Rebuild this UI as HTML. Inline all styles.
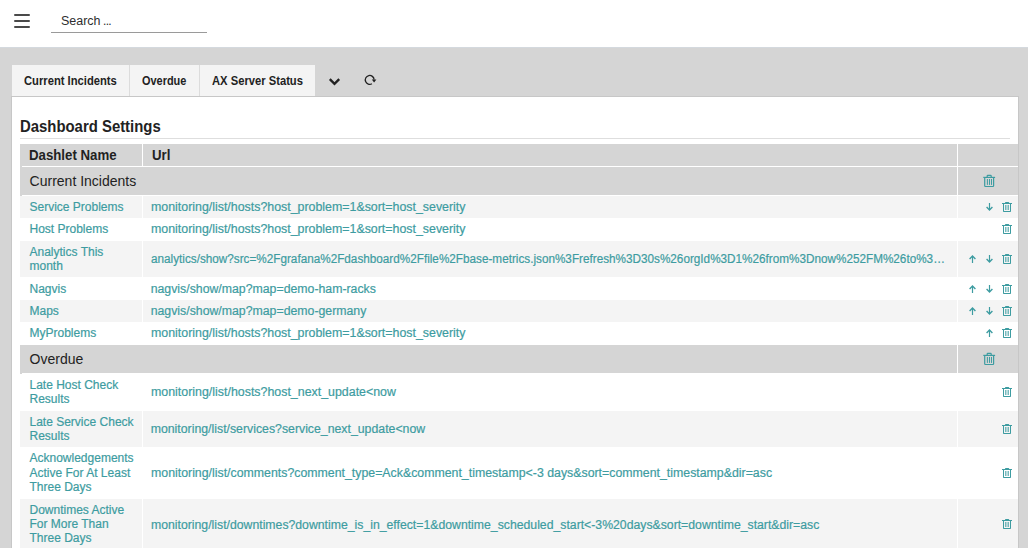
<!DOCTYPE html>
<html><head><meta charset="utf-8"><style>
*{box-sizing:border-box;margin:0;padding:0}
html,body{width:1028px;height:548px;overflow:hidden;background:#d5d5d5;font-family:"Liberation Sans",sans-serif;color:#222}
.a{position:absolute}
#hdr{left:0;top:0;width:1028px;height:47px;background:#fff}
.bar{position:absolute;left:13.6px;width:16.6px;height:2px;background:#4a4a4a;border-radius:1px}
.t{position:absolute;white-space:nowrap;line-height:1}
.b{font-weight:bold}
.sx{transform-origin:0 0}
.tab{position:absolute;top:65px;height:31px;background:#f4f4f4}
.tsep{position:absolute;top:65px;width:1px;height:31px;background:#dcdcdc}
.row{position:absolute;left:20px;width:998px;overflow:hidden}
.g{background:#d5d5d5}
.s{background:#f4f4f4}
.w{background:#fff}
.vs{position:absolute;top:0;bottom:0;width:1px;background:#fff}
.nm{position:absolute;left:9.5px;font-size:12px;line-height:14.6px;white-space:nowrap;color:#3d9ca1;-webkit-text-stroke:0.2px #3d9ca1}
.url{position:absolute;left:130.7px;font-size:12.3px;line-height:1;white-space:nowrap;color:#3d9ca1;-webkit-text-stroke:0.2px #3d9ca1}
svg.ic{position:absolute;left:0;top:0;overflow:visible}
</style></head><body>
<div id="hdr" class="a"><div class="bar" style="top:14px"></div><div class="bar" style="top:20px"></div><div class="bar" style="top:26px"></div>
<div class="t sx" style="left:60.5px;top:15px;font-size:12px;color:#2e2e2e;transform:scaleX(1.04);">Search</div>
<div class="t" style="left:103.1px;top:15px;font-size:12px;color:#2e2e2e;letter-spacing:-0.75px;">...</div>
<div class="a" style="left:51px;top:32px;width:156px;height:1px;background:#9a9a9a"></div></div>
<div class="tab" style="left:12px;width:117px"></div><div class="tsep" style="left:129px"></div>
<div class="tab" style="left:130px;width:69px"></div><div class="tsep" style="left:199px"></div>
<div class="tab" style="left:200px;width:115px"></div>
<div class="t b sx" style="left:24px;top:74.5px;font-size:12px;color:#222;transform:scaleX(0.934);">Current Incidents</div>
<div class="t b sx" style="left:142px;top:74.5px;font-size:12px;color:#222;transform:scaleX(0.91);">Overdue</div>
<div class="t b sx" style="left:212px;top:74.5px;font-size:12px;color:#222;transform:scaleX(0.934);">AX Server Status</div>
<svg class="ic" width="1" height="1">
<path d="M329.8 79.2 L334.5 83.8 L339.2 79.2" fill="none" stroke="#222" stroke-width="2.4"/>
<path d="M371.9 83.7 A4.4 4.4 0 1 1 374.1 79.6" fill="none" stroke="#222" stroke-width="1.3"/>
<path d="M371.8 79.4 L376.4 79.4 L374.1 82.4 Z" fill="#222"/>
</svg>
<div class="a" style="left:11px;top:96px;width:1008px;height:452px;background:#c7c7c7"></div>
<div class="a" style="left:12px;top:97px;width:1006px;height:451px;background:#fff"></div>
<div class="a" style="left:0;top:47px;width:1028px;height:1px;background:#d4d9de"></div>
<div class="t b sx" style="left:20px;top:119px;font-size:16px;color:#222;transform:scaleX(0.931);">Dashboard Settings</div>
<div class="a" style="left:20px;top:138px;width:990px;height:1px;background:#dedede"></div>
<svg width="0" height="0" style="position:absolute"><defs>
<g id="trb" fill="none" stroke="#3d9ca1">
 <path d="M0 2.6 H11.8" stroke-width="1.2"/>
 <path d="M3.9 2.6 V1.2 Q3.9 0.6 4.5 0.6 H7.3 Q7.9 0.6 7.9 1.2 V2.6" stroke-width="1.2"/>
 <path d="M1.4 3 V11 Q1.4 11.7 2.1 11.7 H9.6 Q10.3 11.7 10.3 11 V3" stroke-width="1.2"/>
 <path d="M4.1 4.2 V10.1 M6.2 4.2 V10.1 M8.2 4.2 V10.1" stroke-width="1"/>
</g>
<g id="trs" fill="#3d9ca1">
 <rect x="3" y="0" width="4.2" height="1.6" rx="0.7"/>
 <rect x="0" y="1" width="10" height="1"/>
 <path d="M1 2 H2 V9 H8 V2 H9 V9.3 Q9 10 8.3 10 H1.7 Q1 10 1 9.3 Z"/>
 <rect x="3.05" y="3" width="0.7" height="5"/>
 <rect x="4.65" y="3" width="0.7" height="5"/>
 <rect x="6.25" y="3" width="0.7" height="5"/>
</g>
<g id="up" fill="none" stroke="#3d9ca1"><path d="M3.5 1 V8" stroke-width="1.2"/><path d="M0.6 3.9 L3.5 1 L6.4 3.9" stroke-width="1.4"/></g>
<g id="dn" fill="none" stroke="#3d9ca1"><path d="M3.5 0 V7" stroke-width="1.2"/><path d="M0.6 4.1 L3.5 7 L6.4 4.1" stroke-width="1.4"/></g>
</defs></svg>
<div class="row g" style="top:144px;height:22px"><div class="vs" style="left:122px"></div><div class="vs" style="left:937px"></div></div>
<div class="t b sx" style="left:28.6px;top:148px;font-size:14px;color:#222;transform:scaleX(0.945);">Dashlet Name</div>
<div class="t b sx" style="left:152px;top:148px;font-size:14px;color:#222;transform:scaleX(0.945);">Url</div>
<div class="row g" style="top:167px;height:28px"><div class="vs" style="left:937px"></div><svg class="ic" width="998" height="28"><use href="#trb" x="963.3" y="7.8"/></svg></div><div class="t" style="left:29.6px;top:174px;font-size:14px;color:#222;">Current Incidents</div>
<div class="row s" style="top:196px;height:22px"><div class="vs" style="left:122px"></div><div class="vs" style="left:937px"></div><svg class="ic" width="998" height="22"><use href="#dn" x="966" y="7"/><use href="#trs" x="982" y="6"/></svg></div>
<div class="nm" style="left:29.5px;top:200.10px">Service Problems</div>
<div class="url" style="left:150.7px;top:201.35px;transform:scaleX(1.0067);transform-origin:0 0;">monitoring/list/hosts?host_problem=1&amp;sort=host_severity</div>
<div class="row w" style="top:218px;height:23px"><div class="vs" style="left:122px"></div><div class="vs" style="left:937px"></div><svg class="ic" width="998" height="23"><use href="#trs" x="982" y="6"/></svg></div>
<div class="nm" style="left:29.5px;top:222.10px">Host Problems</div>
<div class="url" style="left:150.7px;top:223.35px;transform:scaleX(1.0067);transform-origin:0 0;">monitoring/list/hosts?host_problem=1&amp;sort=host_severity</div>
<div class="row s" style="top:241px;height:36px"><div class="vs" style="left:122px"></div><div class="vs" style="left:937px"></div><svg class="ic" width="998" height="36"><use href="#dn" x="966" y="14"/><use href="#up" x="949" y="14"/><use href="#trs" x="982" y="13"/></svg></div>
<div class="nm" style="left:29.5px;top:245.10px">Analytics This</div>
<div class="nm" style="left:29.5px;top:259.10px">month</div>
<div class="url" style="left:150.7px;top:253.35px;transform:scaleX(0.954);transform-origin:0 0;">analytics/show?src=%2Fgrafana%2Fdashboard%2Ffile%2Fbase-metrics.json%3Frefresh%3D30s%26orgId%3D1%26from%3Dnow%252FM%26to%3…</div>
<div class="row w" style="top:277px;height:23px"><div class="vs" style="left:122px"></div><div class="vs" style="left:937px"></div><svg class="ic" width="998" height="23"><use href="#dn" x="966" y="8"/><use href="#up" x="949" y="8"/><use href="#trs" x="982" y="7"/></svg></div>
<div class="nm" style="left:29.5px;top:282.10px">Nagvis</div>
<div class="url" style="left:150.7px;top:283.35px;">nagvis/show/map?map=demo-ham-racks</div>
<div class="row s" style="top:300px;height:22px"><div class="vs" style="left:122px"></div><div class="vs" style="left:937px"></div><svg class="ic" width="998" height="22"><use href="#dn" x="966" y="7"/><use href="#up" x="949" y="7"/><use href="#trs" x="982" y="6"/></svg></div>
<div class="nm" style="left:29.5px;top:304.10px">Maps</div>
<div class="url" style="left:150.7px;top:305.35px;">nagvis/show/map?map=demo-germany</div>
<div class="row w" style="top:322px;height:23px"><div class="vs" style="left:122px"></div><div class="vs" style="left:937px"></div><svg class="ic" width="998" height="23"><use href="#up" x="966" y="7"/><use href="#trs" x="982" y="6"/></svg></div>
<div class="nm" style="left:29.5px;top:326.10px">MyProblems</div>
<div class="url" style="left:150.7px;top:327.35px;transform:scaleX(1.0067);transform-origin:0 0;">monitoring/list/hosts?host_problem=1&amp;sort=host_severity</div>
<div class="row g" style="top:345px;height:28px"><div class="vs" style="left:937px"></div><svg class="ic" width="998" height="28"><use href="#trb" x="963.3" y="7.8"/></svg></div><div class="t" style="left:29.6px;top:352px;font-size:14px;color:#222;">Overdue</div>
<div class="row w" style="top:373px;height:38px"><div class="vs" style="left:122px"></div><div class="vs" style="left:937px"></div><svg class="ic" width="998" height="38"><use href="#trs" x="982" y="14"/></svg></div>
<div class="nm" style="left:29.5px;top:378.10px">Late Host Check</div>
<div class="nm" style="left:29.5px;top:392.10px">Results</div>
<div class="url" style="left:150.7px;top:386.35px;transform:scaleX(1.008);transform-origin:0 0;">monitoring/list/hosts?host_next_update&lt;now</div>
<div class="row s" style="top:411px;height:36px"><div class="vs" style="left:122px"></div><div class="vs" style="left:937px"></div><svg class="ic" width="998" height="36"><use href="#trs" x="982" y="13"/></svg></div>
<div class="nm" style="left:29.5px;top:415.10px">Late Service Check</div>
<div class="nm" style="left:29.5px;top:429.10px">Results</div>
<div class="url" style="left:150.7px;top:423.35px;">monitoring/list/services?service_next_update&lt;now</div>
<div class="row w" style="top:447px;height:52px"><div class="vs" style="left:122px"></div><div class="vs" style="left:937px"></div><svg class="ic" width="998" height="52"><use href="#trs" x="982" y="21"/></svg></div>
<div class="nm" style="left:29.5px;top:451.10px">Acknowledgements</div>
<div class="nm" style="left:29.5px;top:466.10px">Active For At Least</div>
<div class="nm" style="left:29.5px;top:480.10px">Three Days</div>
<div class="url" style="left:150.7px;top:467.35px;transform:scaleX(1.003);transform-origin:0 0;">monitoring/list/comments?comment_type=Ack&amp;comment_timestamp&lt;-3 days&amp;sort=comment_timestamp&amp;dir=asc</div>
<div class="row s" style="top:499px;height:52px"><div class="vs" style="left:122px"></div><div class="vs" style="left:937px"></div><svg class="ic" width="998" height="52"><use href="#trs" x="982" y="20"/></svg></div>
<div class="nm" style="left:29.5px;top:503.10px">Downtimes Active</div>
<div class="nm" style="left:29.5px;top:517.10px">For More Than</div>
<div class="nm" style="left:29.5px;top:531.10px">Three Days</div>
<div class="url" style="left:150.7px;top:519.35px;transform:scaleX(0.996);transform-origin:0 0;">monitoring/list/downtimes?downtime_is_in_effect=1&amp;downtime_scheduled_start&lt;-3%20days&amp;sort=downtime_start&amp;dir=asc</div>
<div class="a" style="left:20px;top:166px;width:2px;height:1px;background:#d5d5d5"></div>
<div class="a" style="left:20px;top:195px;width:2px;height:1px;background:#d5d5d5"></div>
<div class="a" style="left:20px;top:373px;width:2px;height:1px;background:#d5d5d5"></div>
</body></html>
